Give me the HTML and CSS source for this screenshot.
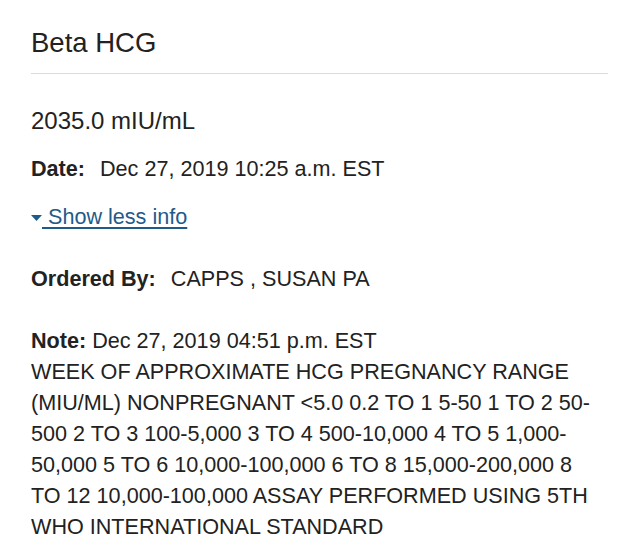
FILE: index.html
```html
<!DOCTYPE html>
<html lang="en">

<head>
    <meta charset="UTF-8" />
    <meta name="viewport" content="width=device-width, initial-scale=1.0" />
    <title>Beta HCG</title>
    <link rel="stylesheet" href="styles.css">
</head>

<body>
    <main class="result">
        <h1 class="title">Beta HCG</h1>
        <div class="value">2035.0 mIU/mL</div>
        <p class="row"><span class="label">Date:</span>Dec 27, 2019 10:25 a.m. EST</p>
        <a class="toggle" href="#"><svg class="caret" width="11" height="6" viewBox="0 0 11 6"><path d="M0 0h11L5.5 6z" /></svg> Show less info</a>
        <p class="row ordered"><span class="label">Ordered By:</span>CAPPS , SUSAN PA</p>
        <div class="note">
            <b>Note:</b> Dec 27, 2019 04:51 p.m. EST<br>
            WEEK OF APPROXIMATE HCG PREGNANCY RANGE (MIU/ML) NONPREGNANT &lt;5.0 0.2 TO 1 5-50 1 TO 2 50-500 2 TO 3 100-5,000 3 TO 4 500-10,000 4 TO 5 1,000-50,000 5 TO 6 10,000-100,000 6 TO 8 15,000-200,000 8 TO 12 10,000-100,000 ASSAY PERFORMED USING 5TH WHO INTERNATIONAL STANDARD
        </div>
    </main>
</body>

</html>
```

FILE: styles.css
```css
* {
    padding: 0;
    margin: 0;
    box-sizing: border-box;
}

body {
    font-family: "Liberation Sans", Arial, sans-serif;
    background-color: #fff;
    color: #222;
}

.result {
    padding: 26px 32px 0 31px;
}

.title {
    font-size: 27.5px;
    font-weight: normal;
    line-height: 33px;
    padding-bottom: 14px;
    border-bottom: 1px solid #dcdcdc;
}

.value {
    font-size: 24px;
    line-height: 30px;
    margin-top: 32px;
}

.row {
    font-size: 21.6px;
    line-height: 31px;
    margin-top: 17px;
}

.label {
    font-weight: bold;
    margin-right: 15px;
}

.toggle {
    display: inline-block;
    margin-top: 17px;
    font-size: 21.6px;
    line-height: 31px;
    color: #1f5b8a;
    text-decoration: underline;
    text-underline-offset: 3px;
}

.caret {
    fill: #1f5b8a;
    vertical-align: 3px;
}

.ordered {
    margin-top: 31px;
}

.note {
    margin-top: 31px;
    font-size: 21.6px;
    line-height: 31px;
    padding-right: 10px;
}
```
